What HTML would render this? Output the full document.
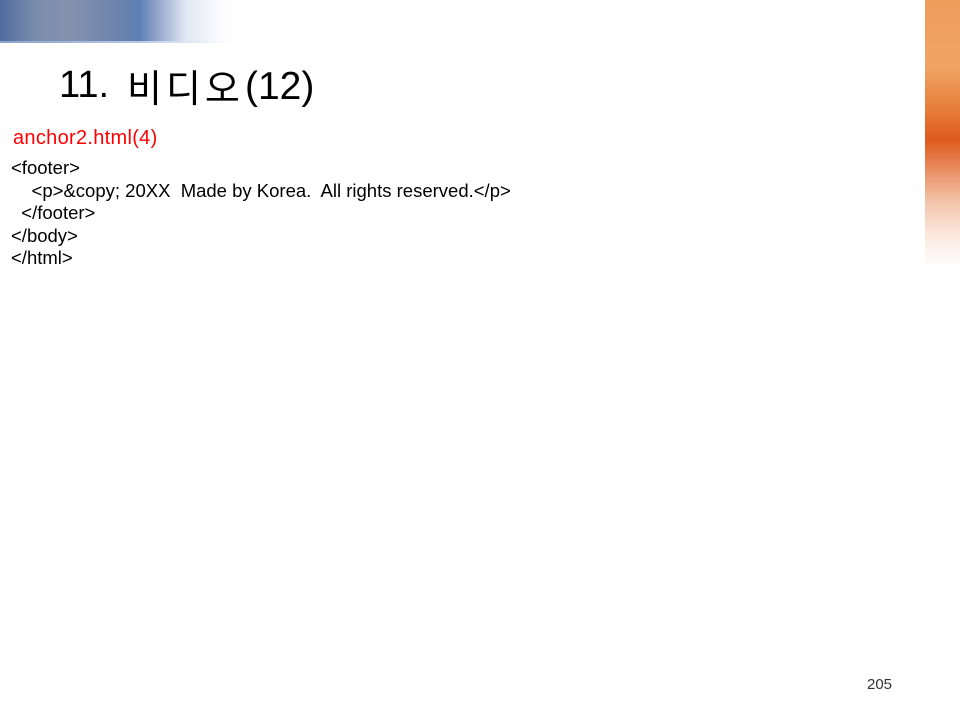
<!DOCTYPE html>
<html><head><meta charset="utf-8"><style>
html,body{margin:0;padding:0;background:#fff;}
body{width:960px;height:720px;position:relative;overflow:hidden;font-family:"Liberation Sans","Noto Sans CJK KR",sans-serif;}
.bar{position:absolute;left:0;top:0;width:232px;height:41px;background:linear-gradient(90deg,#4f6c9e 0%,#7a8cad 15%,#8592ae 30%,#6d84ad 50%,#5e7fb5 60%,#93a6cc 68%,#dfe7f2 80%,#f6f9fd 92%,#fff 100%);}
.bar2{position:absolute;left:0;top:41px;width:232px;height:2px;background:linear-gradient(90deg,#8aa2cf,#b9c8e6 60%,#fff);}
.or{position:absolute;left:925px;top:0;width:35px;height:268px;background:linear-gradient(180deg,#ee9d5a 0%,#f0a565 25%,#e4722e 45%,#de5a1c 52%,#e8875a 62%,#f3c3a8 75%,#fbe9df 88%,#fff 100%);}
.t{position:absolute;white-space:pre;}
</style></head><body>
<div class="bar"></div><div class="bar2"></div><div class="or"></div>
<div class="t" style="left:59px;top:64px;font-size:38px;color:#000;">11.</div>
<div class="t" style="left:127px;top:58px;font-size:38px;color:#000;font-family:'Noto Sans CJK KR',sans-serif;letter-spacing:4px;">비디오</div>
<div class="t" style="left:245px;top:65px;font-size:39px;color:#000;">(12)</div>
<div class="t" style="left:13px;top:127px;font-size:20px;color:#f00;letter-spacing:0.3px;">anchor2.html(4)</div>
<div class="t" style="left:11px;top:157px;font-size:18.5px;line-height:22.5px;color:#000;">&lt;footer&gt;
    &lt;p&gt;&amp;copy; 20XX  Made by Korea.  All rights reserved.&lt;/p&gt;
  &lt;/footer&gt;
&lt;/body&gt;
&lt;/html&gt;</div>
<div class="t" style="left:867px;top:676px;font-size:15px;color:#333;">205</div>
</body></html>
